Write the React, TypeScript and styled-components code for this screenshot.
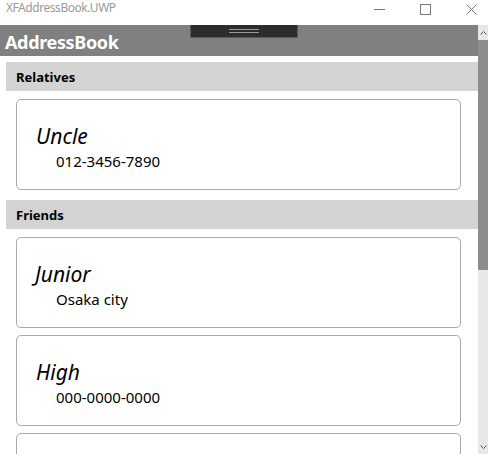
import React from "react";
import styled, { createGlobalStyle } from "styled-components";

const Global = createGlobalStyle`
  html, body { margin: 0; padding: 0; background: #ffffff; }
  body { font-family: "Noto Sans", "Open Sans", sans-serif; }
`;

const Window = styled.div`
  width: 488px;
  height: 454px;
  display: flex;
  flex-direction: column;
  overflow: hidden;
  background: #fff;
`;

const TitleBar = styled.div`
  height: 25px;
  display: flex;
  align-items: flex-start;
  justify-content: space-between;
  padding-left: 6px;
  flex-shrink: 0;
`;

const TitleText = styled.span`
  font-size: 12px;
  line-height: 16px;
  color: #9a9a9a;
  letter-spacing: -0.45px;
`;

const Controls = styled.div`
  display: flex;
  height: 25px;
  align-items: flex-start;
  margin-right: -6px;
`;

const ControlButton = styled.div`
  width: 46px;
  height: 19px;
  display: flex;
  align-items: center;
  justify-content: center;
`;

const Body = styled.div`
  flex: 1;
  display: flex;
  min-height: 0;
`;

const Main = styled.div`
  flex: 1;
  display: flex;
  flex-direction: column;
  min-width: 0;
`;

const NavBar = styled.div`
  position: relative;
  height: 31px;
  background: #808080;
  display: flex;
  align-items: center;
  padding-left: 5px;
  flex-shrink: 0;
`;

const NavTitle = styled.span`
  color: #ffffff;
  font-weight: 700;
  font-size: 18px;
  letter-spacing: -0.35px;
  margin-top: 2px;
`;

const DragHandle = styled.div`
  position: absolute;
  left: 190px;
  top: 0;
  width: 106px;
  height: 12px;
  background: #2d2d2f;
  border: 1px solid #5a5a5a;
  border-top: none;
  display: flex;
  flex-direction: column;
  align-items: center;
  justify-content: center;
  gap: 2px;
`;

const HandleLine = styled.div`
  width: 30px;
  height: 1px;
  background: #9a9a9a;
`;

const List = styled.div`
  flex: 1;
  padding: 6px 0 0 6px;
  display: flex;
  flex-direction: column;
  overflow: hidden;
`;

const GroupHeader = styled.div`
  height: 29px;
  background: #d3d3d3;
  display: flex;
  align-items: center;
  padding-left: 10px;
  font-size: 13px;
  font-weight: 700;
  color: #000;
  flex-shrink: 0;
`;

const Group = styled.div`
  display: flex;
  flex-direction: column;
  margin-bottom: 3px;
`;

const Cards = styled.div`
  display: flex;
  flex-direction: column;
  gap: 7px;
  padding: 8px 17px 7px 10px;
`;

const Card = styled.div`
  height: 91px;
  box-sizing: border-box;
  border: 1px solid #a9a9a9;
  border-radius: 5px;
  padding: 22px 0 0 19px;
  flex-shrink: 0;
`;

const Name = styled.div<{ $nudge?: number }>`
  font-style: italic;
  font-size: 21px;
  line-height: 28px;
  color: #000;
  margin-left: ${(p) => p.$nudge ?? 0}px;
`;

const Detail = styled.div`
  font-size: 15px;
  line-height: 22px;
  color: #000;
  padding-left: 20px;
`;

const ScrollBar = styled.div`
  width: 10px;
  background: #e8e8e8;
  display: flex;
  flex-direction: column;
  flex-shrink: 0;
`;

const ScrollArrow = styled.div`
  height: 15px;
  display: flex;
  align-items: center;
  justify-content: center;
  flex-shrink: 0;
`;

const Thumb = styled.div`
  height: 230px;
  background: #8c8c8c;
  flex-shrink: 0;
`;

const Track = styled.div`
  flex: 1;
`;

type Contact = { name: string; detail: string; nudge?: number };
const groups: { title: string; items: Contact[] }[] = [
  { title: "Relatives", items: [{ name: "Uncle", detail: "012-3456-7890" }] },
  {
    title: "Friends",
    items: [
      { name: "Junior", detail: "Osaka city", nudge: -1 },
      { name: "High", detail: "000-0000-0000" },
      { name: "", detail: "" },
    ],
  },
];

export default function App() {
  return (
    <>
      <Global />
      <Window>
        <TitleBar>
          <TitleText>XFAddressBook.UWP</TitleText>
          <Controls>
            <ControlButton>
              <svg width="11" height="11" viewBox="0 0 11 11">
                <line x1="0" y1="5.5" x2="11" y2="5.5" stroke="#777" strokeWidth="1" />
              </svg>
            </ControlButton>
            <ControlButton>
              <svg width="11" height="11" viewBox="0 0 11 11">
                <rect x="0.5" y="0.5" width="10" height="10" fill="none" stroke="#777" strokeWidth="1" />
              </svg>
            </ControlButton>
            <ControlButton>
              <svg width="11" height="11" viewBox="0 0 11 11">
                <path d="M0.5 0.5 L10.5 10.5 M10.5 0.5 L0.5 10.5" stroke="#777" strokeWidth="1" />
              </svg>
            </ControlButton>
          </Controls>
        </TitleBar>
        <Body>
          <Main>
            <NavBar>
              <NavTitle>AddressBook</NavTitle>
              <DragHandle>
                <HandleLine />
                <HandleLine />
              </DragHandle>
            </NavBar>
            <List>
              {groups.map((g) => (
                <Group key={g.title}>
                  <GroupHeader>{g.title}</GroupHeader>
                  <Cards>
                    {g.items.map((c, i) => (
                      <Card key={i}>
                        <Name $nudge={c.nudge}>{c.name}</Name>
                        <Detail>{c.detail}</Detail>
                      </Card>
                    ))}
                  </Cards>
                </Group>
              ))}
            </List>
          </Main>
          <ScrollBar>
            <ScrollArrow>
              <svg width="7" height="4" viewBox="0 0 7 4">
                <path d="M0.5 3.5 L3.5 0.5 L6.5 3.5" fill="none" stroke="#555" strokeWidth="1" />
              </svg>
            </ScrollArrow>
            <Thumb />
            <Track />
            <ScrollArrow>
              <svg width="7" height="4" viewBox="0 0 7 4">
                <path d="M0.5 0.5 L3.5 3.5 L6.5 0.5" fill="none" stroke="#555" strokeWidth="1" />
              </svg>
            </ScrollArrow>
          </ScrollBar>
        </Body>
      </Window>
    </>
  );
}
